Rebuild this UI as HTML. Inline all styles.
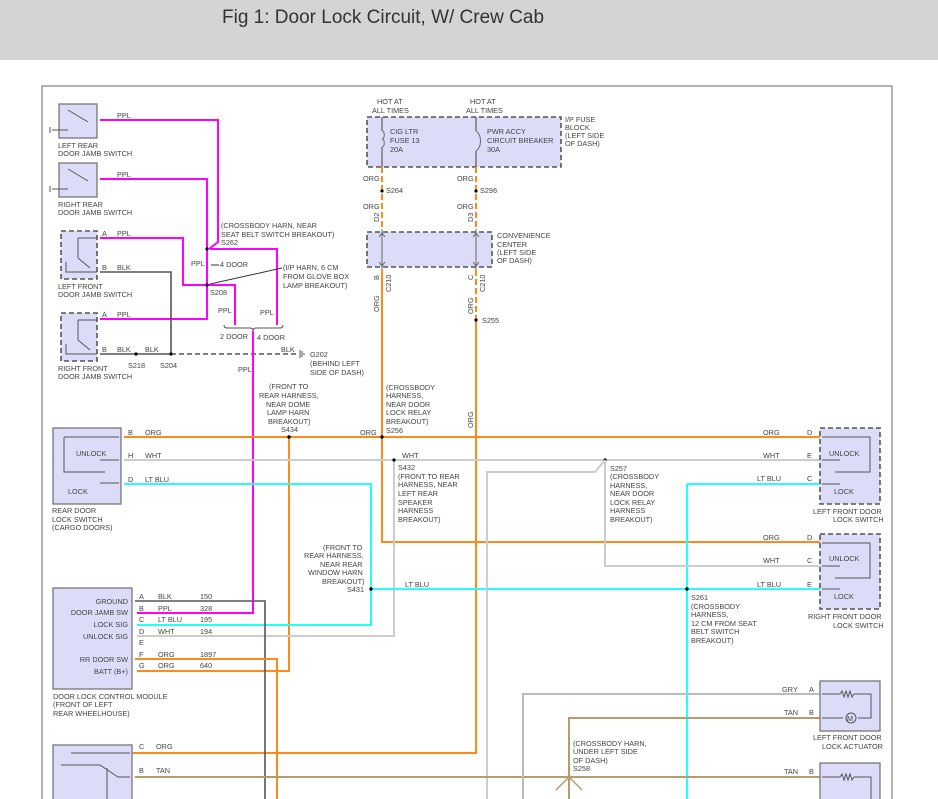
<!DOCTYPE html>
<html><head><meta charset="utf-8"><style>
html,body{margin:0;padding:0;background:#fff;width:938px;height:799px;overflow:hidden}
.hdr{position:absolute;left:0;top:0;width:938px;height:60px;background:#d4d4d4}
.hdr span{position:absolute;left:222px;top:7px;font:19px "Liberation Sans",sans-serif;color:#333}
svg{position:absolute;left:0;top:0}
text{font-family:"Liberation Sans",sans-serif;font-size:7.3px;fill:#444}
.p{stroke:#f0f;stroke-width:2;fill:none}
.o{stroke:#ff8a1a;stroke-width:2;fill:none}
.c{stroke:#2ff;stroke-width:2;fill:none}
.w{stroke:#ccc;stroke-width:2;fill:none}
.k{stroke:#555;stroke-width:1.6;fill:none}
.t{stroke:#b59c6a;stroke-width:2;fill:none}
.g{stroke:#bbb;stroke-width:2;fill:none}
.bx{fill:#dcdcf8;stroke:#777;stroke-width:1.3}
.dbx{fill:#dcdcf8;stroke:#555;stroke-width:1.6;stroke-dasharray:5,3}
.in{stroke:#555;stroke-width:1;fill:none}
</style></head><body>
<div class="hdr"><span>Fig 1: Door Lock Circuit, W/ Crew Cab</span></div>
<svg width="938" height="799" viewBox="0 0 938 799">
<path d="M42,799V86H892V799" fill="none" stroke="#999" stroke-width="1.5"/>
<!-- left switches -->
<rect class="bx" x="59" y="104" width="38" height="34"/>
<path class="in" d="M68,110L88,122M52,130H68M50,127v6"/>
<rect class="bx" x="59" y="163" width="38" height="34"/>
<path class="in" d="M68,169L88,181M52,189H68M50,186v6"/>
<rect class="dbx" x="61" y="231" width="36" height="48"/>
<path class="in" d="M78,238H97M78,238V258M78,258L90,268M66,262V272H97"/>
<rect class="dbx" x="61" y="313" width="36" height="48"/>
<path class="in" d="M78,320H97M78,320V340M78,340L90,350M66,344V354H97"/>
<text x="58" y="148">LEFT REAR</text><text x="58" y="156">DOOR JAMB SWITCH</text>
<text x="58" y="207">RIGHT REAR</text><text x="58" y="215">DOOR JAMB SWITCH</text>
<text x="58" y="289">LEFT FRONT</text><text x="58" y="297">DOOR JAMB SWITCH</text>
<text x="58" y="371">RIGHT FRONT</text><text x="58" y="379">DOOR JAMB SWITCH</text>
<path class="p" d="M100,120H218V242L209,249M100,179H207V285M210,249H277V325M100,238H183V285H235V325M100,319H207V285"/>
<path class="k" d="M100,272H171V355M100,354H171"/>
<path d="M171,354H298" stroke="#555" stroke-width="1.6" stroke-dasharray="5,3"/>
<path d="M300,350v8M302,351v6M304,353v2" stroke="#555"/>
<g fill="#000"><circle cx="207" cy="249" r="1.6"/><circle cx="207" cy="285" r="1.6"/><circle cx="136" cy="354" r="1.6"/><circle cx="171" cy="354" r="1.6"/></g>
<text x="117" y="118">PPL</text><text x="117" y="177">PPL</text><text x="117" y="236">PPL</text><text x="117" y="270">BLK</text><text x="117" y="317">PPL</text><text x="117" y="352">BLK</text><text x="145" y="352">BLK</text><text x="281" y="352">BLK</text>
<text x="102" y="236">A</text><text x="102" y="270">B</text><text x="102" y="317">A</text><text x="102" y="352">B</text>
<text x="221" y="228">(CROSSBODY HARN, NEAR</text><text x="221" y="237">SEAT BELT SWITCH BREAKOUT)</text><text x="221" y="245">S262</text>
<text x="191" y="266">PPL</text><text x="220" y="267">4 DOOR</text><path d="M211,265H219" stroke="#333"/>
<text x="283" y="270">(I/P HARN, 6 CM</text><text x="283" y="279">FROM GLOVE BOX</text><text x="283" y="288">LAMP BREAKOUT)</text>
<path d="M282,268L210,284" stroke="#333"/>
<text x="210" y="295">S208</text>
<text x="218" y="313">PPL</text><text x="260" y="315">PPL</text>
<path d="M224,325c0,3 2,3 4,3H250c2,0 3,1 3,3c0-2 1-3 3-3H279c2,0 4,0 4,-3" stroke="#555" fill="none"/>
<text x="220" y="339">2 DOOR</text><text x="257" y="340">4 DOOR</text>
<text x="128" y="368">S218</text><text x="160" y="368">S204</text>
<text x="310" y="357">G202</text><text x="310" y="366">(BEHIND LEFT</text><text x="310" y="375">SIDE OF DASH)</text>
<path class="p" d="M253,331V613H137"/>
<text x="238" y="372">PPL</text>
<!-- fuse block -->
<text x="377" y="104">HOT AT</text><text x="372" y="113">ALL TIMES</text>
<text x="470" y="104">HOT AT</text><text x="466" y="113">ALL TIMES</text>
<rect class="dbx" x="367" y="117" width="194" height="50"/>
<path d="M382,117V131M382,147V167M476,117V131M476,151V167" stroke="#666" stroke-width="1.3"/>
<path d="M382,131c3,0 3,8 0,8c3,0 3,8 0,8M476,131c6,4 6,16 0,20" stroke="#666" fill="none"/>
<text x="390" y="134">CIG LTR</text><text x="390" y="143">FUSE 13</text><text x="390" y="152">20A</text>
<text x="487" y="134">PWR ACCY</text><text x="487" y="143">CIRCUIT BREAKER</text><text x="487" y="152">30A</text>
<text x="565" y="122">I/P FUSE</text><text x="565" y="130">BLOCK</text><text x="565" y="138">(LEFT SIDE</text><text x="565" y="146">OF DASH)</text>
<path class="o" d="M382,167V229M476,167V229" stroke-dasharray="6,3"/>
<text x="363" y="181">ORG</text><text x="457" y="181">ORG</text><text x="363" y="209">ORG</text><text x="457" y="209">ORG</text>
<circle cx="382" cy="191" r="1.6"/><circle cx="476" cy="191" r="1.6"/>
<text x="386" y="193">S264</text><text x="480" y="193">S296</text>
<text transform="translate(379,222) rotate(-90)">D2</text><text transform="translate(473,222) rotate(-90)">D3</text>
<rect class="dbx" x="367" y="232" width="125" height="35"/>
<path d="M382,229V270M476,229V270" stroke="#666"/>
<path d="M379,237l3,-4 3,4M379,262l3,4 3,-4M473,237l3,-4 3,4M473,262l3,4 3,-4" stroke="#666" fill="none"/>
<text x="497" y="238">CONVENIENCE</text><text x="497" y="247">CENTER</text><text x="497" y="255">(LEFT SIDE</text><text x="497" y="263">OF DASH)</text>
<text transform="translate(379,280) rotate(-90)">B</text><text transform="translate(391,292) rotate(-90)">C210</text>
<text transform="translate(473,280) rotate(-90)">C</text><text transform="translate(485,292) rotate(-90)">C210</text>
<path class="o" d="M476,270V320" stroke-dasharray="6,3"/>
<path class="o" d="M382,270V542H820M476,320V753H130"/>
<text transform="translate(379,312) rotate(-90)">ORG</text><text transform="translate(473,314) rotate(-90)">ORG</text>
<text transform="translate(473,428) rotate(-90)">ORG</text>
<circle cx="476" cy="320" r="1.6"/><text x="482" y="323">S255</text>
<!-- rear door lock switch -->
<rect class="bx" x="53" y="428" width="68" height="76"/>
<path class="in" d="M64,437H119M64,437V472H105M100,460H119M100,483H119"/>
<text x="76" y="456">UNLOCK</text><text x="68" y="494">LOCK</text>
<text x="52" y="513">REAR DOOR</text><text x="52" y="522">LOCK SWITCH</text><text x="52" y="530">(CARGO DOORS)</text>
<path class="o" d="M124,437H820M289,437V671H137"/>
<path class="w" d="M124,460H820M394,460V636H137"/>
<path class="c" d="M124,484H371V625H137M371,589H820M687,484H820M687,484V799"/>
<text x="128" y="435">B</text><text x="145" y="435">ORG</text><text x="128" y="458">H</text><text x="145" y="458">WHT</text><text x="128" y="482">D</text><text x="145" y="482">LT BLU</text>
<text x="269" y="389">(FRONT TO</text><text x="259" y="398">REAR HARNESS,</text><text x="266" y="407">NEAR DOME</text><text x="267" y="415">LAMP HARN</text><text x="268" y="424">BREAKOUT)</text><text x="281" y="432">S434</text>
<text x="386" y="390">(CROSSBODY</text><text x="386" y="398">HARNESS,</text><text x="386" y="407">NEAR DOOR</text><text x="386" y="415">LOCK RELAY</text><text x="386" y="424">BREAKOUT)</text><text x="386" y="433">S256</text>
<text x="360" y="435">ORG</text><text x="402" y="458">WHT</text>
<text x="398" y="470">S432</text><text x="398" y="479">(FRONT TO REAR</text><text x="398" y="487">HARNESS, NEAR</text><text x="398" y="496">LEFT REAR</text><text x="398" y="505">SPEAKER</text><text x="398" y="513">HARNESS</text><text x="398" y="522">BREAKOUT)</text>
<text x="323" y="550">(FRONT TO</text><text x="304" y="558">REAR HARNESS,</text><text x="320" y="567">NEAR REAR</text><text x="308" y="575">WINDOW HARN</text><text x="322" y="584">BREAKOUT)</text><text x="347" y="592">S431</text>
<text x="405" y="587">LT BLU</text>
<g fill="#000"><circle cx="289" cy="437" r="1.7"/><circle cx="382" cy="437" r="1.7"/><circle cx="394" cy="460" r="1.6"/><circle cx="605" cy="460" r="1.6"/><circle cx="371" cy="589" r="1.7"/><circle cx="687" cy="589" r="1.7"/><circle cx="569" cy="777" r="1.8"/></g>
<path class="w" d="M605,460L595,472H487V799M605,460V566H820"/>
<text x="610" y="471">S257</text><text x="610" y="479">(CROSSBODY</text><text x="610" y="488">HARNESS,</text><text x="610" y="496">NEAR DOOR</text><text x="610" y="505">LOCK RELAY</text><text x="610" y="513">HARNESS</text><text x="610" y="522">BREAKOUT)</text>
<text x="691" y="600">S261</text><text x="691" y="609">(CROSSBODY</text><text x="691" y="617">HARNESS,</text><text x="691" y="626">12 CM FROM SEAT</text><text x="691" y="634">BELT SWITCH</text><text x="691" y="643">BREAKOUT)</text>
<!-- module -->
<rect class="bx" x="53" y="588" width="79" height="101"/>
<text x="128" y="604" text-anchor="end">GROUND</text><text x="128" y="615" text-anchor="end">DOOR JAMB SW</text><text x="128" y="627" text-anchor="end">LOCK SIG</text><text x="128" y="639" text-anchor="end">UNLOCK SIG</text><text x="128" y="662" text-anchor="end">RR DOOR SW</text><text x="128" y="674" text-anchor="end">BATT (B+)</text>
<path class="k" d="M135,601H265V799"/>
<path class="o" d="M135,659H277V799"/>
<text x="139" y="599">A</text><text x="139" y="611">B</text><text x="139" y="622">C</text><text x="139" y="634">D</text><text x="139" y="645">E</text><text x="139" y="657">F</text><text x="139" y="668">G</text>
<text x="158" y="599">BLK</text><text x="158" y="611">PPL</text><text x="158" y="622">LT BLU</text><text x="158" y="634">WHT</text><text x="158" y="657">ORG</text><text x="158" y="668">ORG</text>
<text x="200" y="599">150</text><text x="200" y="611">328</text><text x="200" y="622">195</text><text x="200" y="634">194</text><text x="200" y="657">1897</text><text x="200" y="668">640</text>
<text x="53" y="699">DOOR LOCK CONTROL MODULE</text><text x="53" y="707">(FRONT OF LEFT</text><text x="53" y="716">REAR WHEELHOUSE)</text>
<rect class="bx" x="53" y="745" width="79" height="60"/>
<path class="in" d="M71,753H130M61,765H100L118,777H130M107,768V799" />
<text x="139" y="749">C</text><text x="156" y="749">ORG</text><text x="139" y="773">B</text><text x="156" y="773">TAN</text>
<path class="t" d="M135,777H820M569,777V718H820M569,777V799"/>
<path d="M569,777L556,790M569,777L582,790" stroke="#b59c6a" stroke-width="1.5"/>
<path class="g" d="M523,799V694H820"/>
<text x="573" y="746">(CROSSBODY HARN,</text><text x="573" y="754">UNDER LEFT SIDE</text><text x="573" y="763">OF DASH)</text><text x="573" y="771">S258</text>
<!-- right switches -->
<rect class="dbx" x="820" y="428" width="60" height="76"/>
<path class="in" d="M822,437H870V472H835M822,460H840M822,484H840"/>
<text x="829" y="456">UNLOCK</text><text x="834" y="494">LOCK</text>
<text x="813" y="514">LEFT FRONT DOOR</text><text x="833" y="522">LOCK SWITCH</text>
<rect class="dbx" x="820" y="534" width="60" height="75"/>
<path class="in" d="M822,543H870V578H835M822,566H840M822,589H840"/>
<text x="829" y="561">UNLOCK</text><text x="834" y="599">LOCK</text>
<text x="808" y="619">RIGHT FRONT DOOR</text><text x="833" y="628">LOCK SWITCH</text>
<text x="763" y="435">ORG</text><text x="807" y="435">D</text><text x="763" y="458">WHT</text><text x="807" y="458">E</text><text x="757" y="481">LT BLU</text><text x="807" y="481">C</text>
<text x="763" y="540">ORG</text><text x="807" y="540">D</text><text x="763" y="563">WHT</text><text x="807" y="563">C</text><text x="757" y="587">LT BLU</text><text x="807" y="587">E</text>
<rect class="bx" x="820" y="681" width="60" height="50"/>
<path class="in" d="M822,694H840l2,-3 2,6 2,-6 2,6 2,-6 2,6 2,-3H871V718H858M822,718H843"/>
<circle cx="851" cy="718" r="5" fill="none" stroke="#555"/><text x="847" y="721">M</text>
<text x="813" y="740">LEFT FRONT DOOR</text><text x="822" y="749">LOCK ACTUATOR</text>
<text x="782" y="692">GRY</text><text x="809" y="692">A</text><text x="784" y="715">TAN</text><text x="809" y="715">B</text>
<rect class="bx" x="820" y="763" width="60" height="45"/>
<path class="in" d="M822,777H840l2,-3 2,6 2,-6 2,6 2,-6 2,6 2,-3H871V799"/>
<text x="784" y="774">TAN</text><text x="809" y="774">B</text>
</svg>
</body></html>
